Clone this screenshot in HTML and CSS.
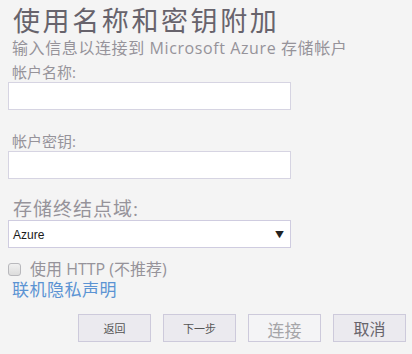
FILE: index.html
```html
<!DOCTYPE html>
<html lang="zh-CN">
<head>
<meta charset="utf-8">
<link rel="stylesheet" href="styles.css">
</head>
<body>
<div class="page">
  <h1 class="title">使用名称和密钥附加</h1>
  <p class="subtitle">输入信息以连接到 Microsoft Azure 存储帐户</p>
  <label class="label label-name">帐户名称:</label>
  <input class="field" type="text">
  <label class="label label-key">帐户密钥:</label>
  <input class="field" type="text">
  <label class="label-big">存储终结点域:</label>
  <div class="select">
    <span class="select-text">Azure</span>
    <span class="select-arrow">▼</span>
  </div>
  <div class="check-row">
    <span class="checkbox"></span>
    <span class="check-label">使用 HTTP (不推荐)</span>
  </div>
  <a class="link">联机隐私声明</a>
  <div class="buttons">
    <button class="btn btn-small">返回</button>
    <button class="btn btn-small">下一步</button>
    <button class="btn btn-disabled">连接</button>
    <button class="btn btn-big">取消</button>
  </div>
</div>
</body>
</html>
```
FILE: styles.css
```css
html, body {
  margin: 0;
  padding: 0;
  background: #f4f4f4;
}
body {
  font-family: "Open Sans", "Noto Sans CJK SC", sans-serif;
  width: 412px;
  height: 354px;
  overflow: hidden;
}
.page {
  padding: 0 8px;
  display: flex;
  flex-direction: column;
  align-items: flex-start;
}
.title {
  margin: 4px 0 0 5px;
  font-family: "Noto Sans CJK SC", sans-serif;
  font-weight: 400;
  font-size: 27px;
  letter-spacing: 2.6px;
  line-height: 32px;
  color: #67636c;
}
.subtitle {
  margin: 0 0 0 4px;
  font-size: 16px;
  line-height: 24px;
  color: #96939a;
  letter-spacing: 0.6px;
}
.label {
  margin-left: 4px;
  font-size: 15px;
  line-height: 20px;
  color: #96939a;
}
.label-name {
  margin-top: 2px;
}
.label-key {
  margin-top: 21px;
}
.field {
  box-sizing: border-box;
  width: 283px;
  height: 28px;
  margin: 0;
  border: 1px solid #d6d4e2;
  background: #fff;
  padding: 0 4px;
}
.label-big {
  margin: 18px 0 0 5px;
  font-size: 19px;
  line-height: 24px;
  color: #96939a;
  letter-spacing: 1px;
}
.select {
  box-sizing: border-box;
  width: 283px;
  height: 28px;
  margin-top: -1px;
  border: 1px solid #cfcce0;
  background: #fff;
  display: flex;
  align-items: center;
  justify-content: space-between;
  padding: 0 6px 0 4px;
}
.select-text {
  font-family: "Liberation Sans", sans-serif;
  font-size: 12px;
  color: #1a1a1a;
  padding-top: 2px;
}
.select-arrow {
  font-size: 9px;
  color: #222;
}
.check-row {
  margin-top: 11px;
  display: flex;
  align-items: center;
  gap: 9px;
}
.checkbox {
  box-sizing: border-box;
  width: 13px;
  height: 13px;
  border: 1px solid #b8b8bc;
  border-radius: 3px;
  background: linear-gradient(#f0f0f0, #dcdcdc);
}
.check-label {
  font-size: 16px;
  line-height: 20px;
  color: #96939a;
}
.link {
  margin-left: 4px;
  font-size: 17px;
  line-height: 21px;
  color: #5b93d3;
  letter-spacing: 0.5px;
}
.buttons {
  align-self: flex-end;
  margin-top: 14px;
  margin-right: -2px;
  display: flex;
  gap: 12px;
}
.btn {
  box-sizing: border-box;
  width: 73px;
  height: 28px;
  margin: 0;
  padding: 0;
  border: 1px solid #cdcadb;
  background: #ebeaef;
  font-family: "Noto Sans CJK SC", sans-serif;
  color: #555;
}
.btn-small {
  font-size: 11px;
}
.btn-disabled {
  background: #f4f4f6;
  color: #a5a5a8;
  font-size: 17px;
  padding-top: 2px;
}
.btn-big {
  font-size: 16px;
  color: #67646b;
}
```
